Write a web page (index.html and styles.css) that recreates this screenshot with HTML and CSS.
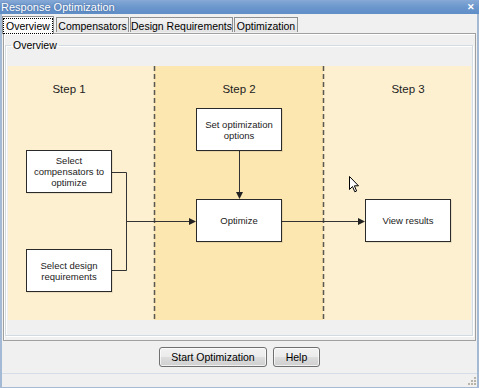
FILE: index.html
```html
<!DOCTYPE html>
<html lang="en">
<head>
  <meta charset="UTF-8">
  <title>Response Optimization</title>
  <link rel="stylesheet" href="styles.css">
</head>
<body>
  <div class="window">
    <div class="titlebar">
      <span class="title">Response Optimization</span>
      <span class="close">&#x2715;</span>
    </div>
    <div class="frame">
      <div class="tabs">
        <div class="tab active"><span class="focus">Overview</span></div>
        <div class="tab tab-comp">Compensators</div>
        <div class="tab tab-req">Design Requirements</div>
        <div class="tab tab-opt">Optimization</div>
      </div>
      <div class="panel">
        <fieldset class="group">
          <legend>Overview</legend>
          <div class="diagram">
            <div class="col col-1"></div>
            <div class="col col-2"></div>
            <div class="col col-3"></div>

            <svg class="wires" width="462" height="254" viewBox="0 0 462 254">
              <!-- step separators -->
              <line x1="146.5" y1="0" x2="146.5" y2="254" class="dash"/>
              <line x1="315.5" y1="0" x2="315.5" y2="254" class="dash"/>
              <!-- step 1 -> optimize -->
              <polyline points="104,106.5 118.5,106.5 118.5,204.5 104,204.5" class="wire"/>
              <line x1="118.5" y1="155.5" x2="181" y2="155.5" class="wire"/>
              <polygon points="181,152 188,155.5 181,159" class="head"/>
              <!-- options -> optimize -->
              <line x1="231.5" y1="84" x2="231.5" y2="126" class="wire"/>
              <polygon points="228,126 231.5,133 235,126" class="head"/>
              <!-- optimize -> results -->
              <line x1="273" y1="155.5" x2="350" y2="155.5" class="wire"/>
              <polygon points="350,152 357,155.5 350,159" class="head"/>
            </svg>

            <div class="step step-1">Step 1</div>
            <div class="step step-2">Step 2</div>
            <div class="step step-3">Step 3</div>

            <div class="node node-comp">Select<br>compensators to<br>optimize</div>
            <div class="node node-req">Select design<br>requirements</div>
            <div class="node node-opts">Set optimization<br>options</div>
            <div class="node node-run">Optimize</div>
            <div class="node node-view">View results</div>

            <svg class="cursor" width="11" height="17" viewBox="0 0 11 17">
              <path d="M0.5 0.5 L0.5 13.5 L3.5 10.5 L5.8 15.8 L7.6 15 L5.4 9.8 L9.5 9.8 Z" fill="#fff" stroke="#000" stroke-width="1"/>
            </svg>
          </div>
        </fieldset>
      </div>
      <div class="actions">
        <button class="btn btn-start">Start Optimization</button>
        <button class="btn btn-help">Help</button>
      </div>
      <div class="status">
        <svg class="grip" width="10" height="10" viewBox="0 0 10 10">
          <rect x="7" y="1" width="2" height="2" fill="#b8b4a8"/>
          <rect x="4" y="4" width="2" height="2" fill="#b8b4a8"/>
          <rect x="7" y="4" width="2" height="2" fill="#b8b4a8"/>
          <rect x="1" y="7" width="2" height="2" fill="#b8b4a8"/>
          <rect x="4" y="7" width="2" height="2" fill="#b8b4a8"/>
          <rect x="7" y="7" width="2" height="2" fill="#b8b4a8"/>
        </svg>
      </div>
    </div>
  </div>
</body>
</html>
```

FILE: styles.css
```css
html, body {
  margin: 0;
  padding: 0;
  background: #f0f0f0;
}
body {
  font-family: 'Liberation Sans', Arial, sans-serif;
  font-size: 10.5px;
  color: #000;
}
.window {
  width: 479px;
  height: 388px;
  display: flex;
  flex-direction: column;
  overflow: hidden;
}
.titlebar {
  height: 14px;
  flex: none;
  display: flex;
  align-items: center;
  justify-content: space-between;
  padding: 0 4px 0 1px;
  background: linear-gradient(#86a9d6, #6b97cd 50%, #5f8dc6);
  color: #fff;
  font-size: 11px;
}
.title {
  text-shadow: 0 0 2px rgba(20, 50, 100, 0.6);
}
.close {
  font-size: 9px;
  font-weight: bold;
}
.frame {
  flex: 1;
  display: flex;
  flex-direction: column;
  border-left: 2px solid #a3b9d4;
  border-right: 2px solid #a3b9d4;
  border-bottom: 1px solid #a3b9d4;
  background: #f0f0f0;
}

/* tabs */
.tabs {
  height: 19px;
  flex: none;
  display: flex;
  align-items: flex-end;
  gap: 1px;
}
.tab {
  height: 15px;
  box-sizing: border-box;
  border: 1px solid #8e8f8f;
  border-bottom: none;
  background: linear-gradient(#f3f3f3, #e3e3e3);
  display: flex;
  align-items: center;
  justify-content: center;
  padding-top: 1px;
  margin-bottom: 1px;
  white-space: nowrap;
}
.tab.active {
  height: 18px;
  width: 52px;
  padding-top: 0;
  margin-bottom: -1px;
  background: #fcfcfc;
  position: relative;
  z-index: 1;
}
.focus {
  border: 1px dotted #000;
  padding: 1px 2px;
}
.tab-comp { width: 73px; margin-left: 1px; }
.tab-req { width: 103px; }
.tab-opt { width: 64px; }

/* panel */
.panel {
  height: 308px;
  flex: none;
  box-sizing: border-box;
  margin: 0 1px;
  border: 1px solid #a0a0a0;
  box-shadow: inset 1px 1px 0 #fff;
  padding: 5px 2px 2px 1px;
}
.group {
  margin: 0;
  padding: 15px 1px 15px 2px;
  border: 1px solid #d3dbe2;
  box-shadow: inset 1px 1px 0 #fff, 1px 1px 0 #fff;
  min-width: 0;
}
.group legend {
  padding: 0 2px;
  margin-left: 3px;
  line-height: 12px;
}

/* diagram canvas */
.diagram {
  position: relative;
  height: 254px;
  display: grid;
  grid-template-columns: 146px 169px 1fr;
  font-family: 'Liberation Sans', Arial, sans-serif;
  color: #222;
}
.col-1, .col-3 { background: #fdf0d0; }
.col-2 { background: #fde7b1; }
.wires {
  position: absolute;
  left: 0;
  top: 0;
}
.wires .dash {
  stroke: #5a5650;
  stroke-width: 1.5;
  stroke-dasharray: 5 3;
}
.wires .wire {
  fill: none;
  stroke: #333;
  stroke-width: 1;
}
.wires .head { fill: #222; }
.step {
  position: absolute;
  top: 16px;
  width: 86px;
  text-align: center;
  font-size: 11.5px;
  line-height: 14px;
}
.step-1 { left: 18px; }
.step-2 { left: 188px; }
.step-3 { left: 357px; }
.node {
  position: absolute;
  box-sizing: border-box;
  width: 86px;
  height: 43px;
  border: 1px solid #2a2a2a;
  background: #fff;
  display: flex;
  align-items: center;
  justify-content: center;
  text-align: center;
  font-size: 9.5px;
  line-height: 11px;
  box-shadow: 1px 1px 0 rgba(0, 0, 0, 0.08);
}
.node-comp { left: 18px; top: 84px; }
.node-req { left: 18px; top: 183px; }
.node-opts { left: 188px; top: 42px; }
.node-run { left: 188px; top: 133px; }
.node-view { left: 357px; top: 133px; }
.cursor {
  position: absolute;
  left: 341px;
  top: 110px;
}

/* buttons */
.actions {
  height: 32px;
  flex: none;
  box-sizing: border-box;
  padding-top: 6px;
  display: flex;
  justify-content: center;
  align-items: flex-start;
  gap: 6px;
}
.btn {
  height: 20px;
  box-sizing: border-box;
  border: 1px solid #707070;
  border-radius: 3px;
  background: linear-gradient(#f2f2f2 0%, #ebebeb 50%, #dddddd 51%, #cfcfcf 100%);
  box-shadow: inset 0 0 0 1px rgba(255, 255, 255, 0.7);
  font-family: 'Liberation Sans', Arial, sans-serif;
  font-size: 10.5px;
  color: #000;
  padding: 0;
}
.btn-start { width: 108px; }
.btn-help { width: 47px; }
.status {
  flex: 1;
  border-top: 1px solid #d5dde6;
  display: flex;
  justify-content: flex-end;
  align-items: flex-end;
}
.grip {
  display: block;
  margin: 0 0 1px 0;
}
```
